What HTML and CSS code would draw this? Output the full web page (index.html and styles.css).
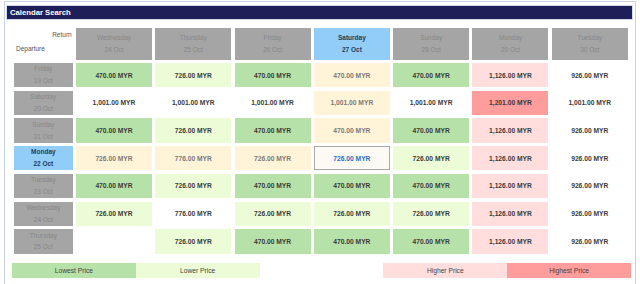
FILE: index.html
```html
<!DOCTYPE html>
<html>
<head>
<meta charset="utf-8">
<link rel="stylesheet" href="styles.css">
</head>
<body>
<div class="box">
  <div class="bar">Calendar Search</div>
  <div class="grid">
    <div class="corner"><span class="ret">Return</span><span class="dep">Departure</span></div>
    <div class="hd">Wednesday<br>24 Oct</div>
    <div class="hd">Thursday<br>25 Oct</div>
    <div class="hd">Friday<br>26 Oct</div>
    <div class="hd sel">Saturday<br>27 Oct</div>
    <div class="hd">Sunday<br>28 Oct</div>
    <div class="hd">Monday<br>29 Oct</div>
    <div class="hd">Tuesday<br>30 Oct</div>

    <div class="rh">Friday<br>19 Oct</div>
    <div class="c g">470.00 MYR</div><div class="c l">726.00 MYR</div><div class="c g">470.00 MYR</div><div class="c y">470.00 MYR</div><div class="c g">470.00 MYR</div><div class="c p">1,126.00 MYR</div><div class="c w">926.00 MYR</div>

    <div class="rh">Saturday<br>20 Oct</div>
    <div class="c w">1,001.00 MYR</div><div class="c w">1,001.00 MYR</div><div class="c w">1,001.00 MYR</div><div class="c y">1,001.00 MYR</div><div class="c w">1,001.00 MYR</div><div class="c r">1,201.00 MYR</div><div class="c w">1,001.00 MYR</div>

    <div class="rh">Sunday<br>21 Oct</div>
    <div class="c g">470.00 MYR</div><div class="c l">726.00 MYR</div><div class="c g">470.00 MYR</div><div class="c y">470.00 MYR</div><div class="c g">470.00 MYR</div><div class="c p">1,126.00 MYR</div><div class="c w">926.00 MYR</div>

    <div class="rh sel">Monday<br>22 Oct</div>
    <div class="c y">726.00 MYR</div><div class="c y">776.00 MYR</div><div class="c y">726.00 MYR</div><div class="c cur">726.00 MYR</div><div class="c l">726.00 MYR</div><div class="c p">1,126.00 MYR</div><div class="c w">926.00 MYR</div>

    <div class="rh">Tuesday<br>23 Oct</div>
    <div class="c g">470.00 MYR</div><div class="c l">726.00 MYR</div><div class="c g">470.00 MYR</div><div class="c g">470.00 MYR</div><div class="c g">470.00 MYR</div><div class="c p">1,126.00 MYR</div><div class="c w">926.00 MYR</div>

    <div class="rh">Wednesday<br>24 Oct</div>
    <div class="c l">726.00 MYR</div><div class="c w">776.00 MYR</div><div class="c l">726.00 MYR</div><div class="c l">726.00 MYR</div><div class="c l">726.00 MYR</div><div class="c p">1,126.00 MYR</div><div class="c w">926.00 MYR</div>

    <div class="rh">Thursday<br>25 Oct</div>
    <div class="c w"></div><div class="c l">726.00 MYR</div><div class="c g">470.00 MYR</div><div class="c g">470.00 MYR</div><div class="c g">470.00 MYR</div><div class="c p">1,126.00 MYR</div><div class="c w">926.00 MYR</div>
  </div>
  <div class="legend">
    <div class="lg g">Lowest Price</div>
    <div class="lg l">Lower Price</div>
    <div class="lg w"></div>
    <div class="lg p">Higher Price</div>
    <div class="lg r">Highest Price</div>
  </div>
</div>
</body>
</html>
```

FILE: styles.css
```css
html, body {
  margin: 0;
  padding: 0;
  background: #ffffff;
  font-family: "Liberation Sans", Arial, sans-serif;
}
.box {
  margin: 1px 0 0 4px;
  width: 630px;
  height: 300px;
  border: 1px solid #c9d2e3;
  box-sizing: content-box;
}
.bar {
  margin: 3px 2px 0 1px;
  height: 13px;
  background: #1e1e58;
  border: 1px solid #d4daea;
  color: #ffffff;
  font-weight: bold;
  font-size: 7.7px;
  line-height: 13px;
  padding-left: 3px;
}
.grid {
  margin: 7.7px 0 0 7px;
  display: grid;
  grid-template-columns: 60.7px repeat(7, 76px);
  grid-template-rows: 32px repeat(7, 24.3px);
  column-gap: 3.3px;
  row-gap: 3.4px;
}
.corner {
  position: relative;
  font-size: 6.5px;
  color: #555555;
}
.ret {
  position: absolute;
  right: 1px;
  top: 3px;
}
.dep {
  position: absolute;
  left: 4px;
  top: 17px;
}
.hd, .rh {
  background: #a5a5a5;
  color: #878787;
  font-size: 6.5px;
  line-height: 11.8px;
  display: flex;
  align-items: center;
  justify-content: center;
  text-align: center;
}
.rh {
  margin-left: 2px;
}
.hd.sel, .rh.sel {
  background: #92cdf8;
  color: #243c5c;
  font-weight: bold;
}
.c {
  display: flex;
  align-items: center;
  justify-content: center;
  font-size: 6.7px;
  font-weight: bold;
  color: #3a3a3a;
}
.g { background: #b6e1a9; }
.l { background: #ebfcd6; }
.y { background: #fff3d8; color: #7a7a7a; }
.p { background: #ffdedd; }
.r { background: #ff9c9c; }
.w { background: #ffffff; }
.cur {
  background: #fdfaf5;
  border: 1px solid #a9a9a9;
  color: #2a6cc0;
}
.legend {
  margin: 9.1px 0 0 7px;
  width: 619px;
  height: 15.4px;
  display: grid;
  grid-template-columns: repeat(5, 1fr);
}
.lg {
  display: flex;
  align-items: center;
  justify-content: center;
  font-size: 6.7px;
  color: #444444;
}
```
